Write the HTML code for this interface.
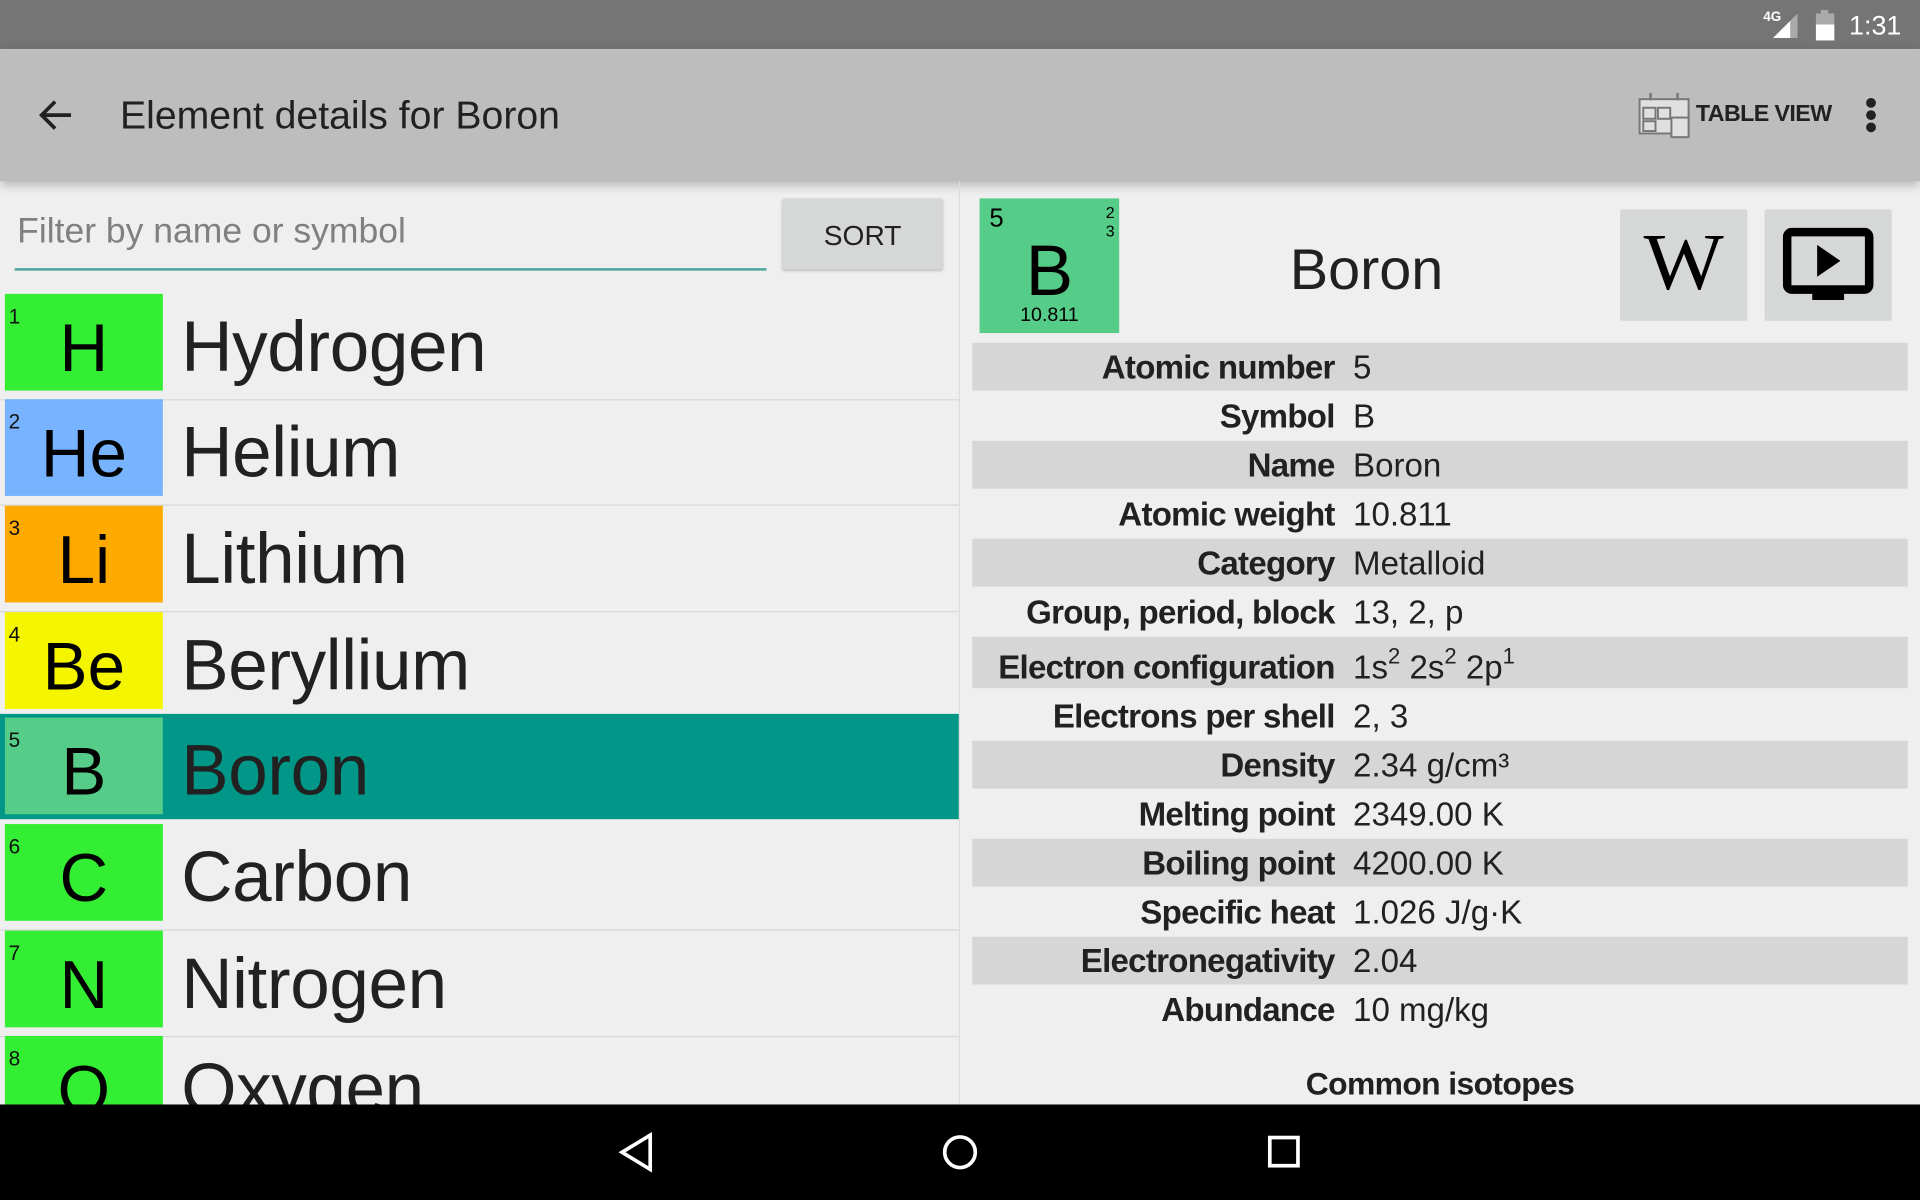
<!DOCTYPE html>
<html><head><meta charset="utf-8">
<style>
html,body{margin:0;padding:0;width:1920px;height:1200px;overflow:hidden;background:#eee;}
#s{position:absolute;left:0;top:0;width:1568px;height:980px;transform:scale(1.22449);transform-origin:0 0;font-family:"Liberation Sans",sans-serif;color:#212121;background:#efefef;overflow:hidden;}
.a{position:absolute;}
.row{position:absolute;left:0;width:783px;height:86px;border-bottom:1px solid #d8d8d8;}
.tile{position:absolute;left:4px;top:0;width:129px;height:79px;}
.tile .n{position:absolute;left:3px;top:9px;font-size:17px;color:#111;}
.tile .sy{position:absolute;left:0;width:129px;top:12px;text-align:center;font-size:55px;color:#000;}
.nm{position:absolute;left:148px;top:10px;font-size:58px;color:#212121;letter-spacing:-0.3px;}
.tr{position:absolute;left:794px;width:764px;height:39px;font-size:27px;line-height:41px;}
.tr.g{background:#d6d6d6;}
.tr b{position:absolute;right:468px;font-weight:bold;letter-spacing:-0.6px;}
.tr span{position:absolute;left:311px;}
sup{font-size:18px;line-height:0;vertical-align:12px;}
</style></head><body><div id="s">
<div class="a" style="left:0;top:0;width:1568px;height:40px;background:#757575;"></div>
<div class="a" style="left:1440px;top:8px;font-size:11px;color:#fff;font-weight:bold;">4G</div>
<svg class="a" style="left:1446px;top:9px" width="24" height="24"><polygon points="2,22 22,2 22,22" fill="#aaa"/><polygon points="2,22 16,8 16,22" fill="#fff"/></svg>
<svg class="a" style="left:1482px;top:8px" width="18" height="26"><rect x="5" y="0" width="6" height="3" fill="#aaa"/><rect x="1" y="3" width="15" height="22" fill="#aaa"/><rect x="1" y="12" width="15" height="13" fill="#fff"/></svg>
<div class="a" style="left:1510px;top:8px;font-size:22px;color:#fff;">1:31</div>
<div class="a" style="left:0;top:40px;width:1568px;height:108px;background:#bdbdbd;box-shadow:0 3px 8px rgba(0,0,0,.25);"></div>
<svg class="a" style="left:30px;top:80px" width="30" height="28"><path d="M28 14H5M15 3L4 14l11 11" stroke="#212121" stroke-width="3" fill="none"/></svg>
<div class="a" style="left:98px;top:76px;font-size:32px;color:#212121;">Element details for Boron</div>
<svg class="a" style="left:1338px;top:74px" width="44" height="40"><g fill="#e0e0e0" stroke="#777" stroke-width="1.6"><rect x="1" y="7" width="40" height="28"/><rect x="4" y="14" width="10" height="9"/><rect x="16" y="14" width="10" height="9"/><rect x="4" y="25" width="10" height="8"/><rect x="27" y="22" width="14" height="16"/></g><path d="M10 2v6M32 2v6" stroke="#777" stroke-width="2"/></svg>
<div class="a" style="left:1385px;top:83px;font-size:19px;font-weight:bold;letter-spacing:-0.5px;">TABLE VIEW</div>
<div class="a" style="left:1524px;top:80px;width:8px;height:8px;border-radius:4px;background:#212121;box-shadow:0 10px 0 #212121,0 20px 0 #212121;"></div>

<div class="a" style="left:14px;top:173px;font-size:29px;color:#808080;">Filter by name or symbol</div>
<div class="a" style="left:12px;top:219px;width:614px;height:2px;background:#4aa39a;"></div>
<div class="a" style="left:639px;top:162px;width:131px;height:58px;background:#d6d7d7;border-radius:2px;box-shadow:0 1px 2px rgba(0,0,0,.2);text-align:center;line-height:60px;font-size:23px;">SORT</div>
<div class="a" style="left:783px;top:148px;width:1px;height:754px;background:#ddd;"></div>

<div class="row" style="top:240px"><div class="tile" style="background:#33ee33"><div class="n">1</div><div class="sy">H</div></div><div class="nm">Hydrogen</div></div>
<div class="row" style="top:326px"><div class="tile" style="background:#77b3ff"><div class="n">2</div><div class="sy">He</div></div><div class="nm">Helium</div></div>
<div class="row" style="top:413px"><div class="tile" style="background:#ffaa00"><div class="n">3</div><div class="sy">Li</div></div><div class="nm">Lithium</div></div>
<div class="row" style="top:500px"><div class="tile" style="background:#f5f500"><div class="n">4</div><div class="sy">Be</div></div><div class="nm">Beryllium</div></div>
<div class="row" style="top:583px;height:86px;background:#009688;border:none"><div class="tile" style="top:3px;background:#55cc88"><div class="n">5</div><div class="sy">B</div></div><div class="nm" style="top:13px">Boron</div></div>
<div class="row" style="top:673px"><div class="tile" style="background:#33ee33"><div class="n">6</div><div class="sy">C</div></div><div class="nm">Carbon</div></div>
<div class="row" style="top:760px"><div class="tile" style="background:#33ee33"><div class="n">7</div><div class="sy">N</div></div><div class="nm">Nitrogen</div></div>
<div class="row" style="top:846px"><div class="tile" style="background:#33ee33"><div class="n">8</div><div class="sy">O</div></div><div class="nm">Oxygen</div></div>

<div class="a" style="left:800px;top:162px;width:114px;height:110px;background:#55cc88;color:#000;">
<div class="a" style="left:8px;top:5px;font-size:21px;">5</div>
<div class="a" style="left:103px;top:4px;font-size:13px;line-height:15px;">2<br>3</div>
<div class="a" style="left:0;width:114px;top:26px;text-align:center;font-size:58px;">B</div>
<div class="a" style="left:0;width:114px;top:87px;text-align:center;font-size:16px;">10.811</div>
</div>
<div class="a" style="left:1016px;width:200px;top:192px;text-align:center;font-size:47px;">Boron</div>
<div class="a" style="left:1323px;top:171px;width:104px;height:91px;background:#d6d7d7;border-radius:2px;"></div>
<div class="a" style="left:1323px;top:182px;width:104px;text-align:center;font-family:'Liberation Serif',serif;font-size:66px;line-height:66px;color:#000;transform:scaleX(1.05);">W</div>
<div class="a" style="left:1441px;top:171px;width:104px;height:91px;background:#d6d7d7;border-radius:2px;"></div>
<svg class="a" style="left:1456px;top:186px" width="76" height="62"><rect x="3.5" y="3.5" width="67" height="47" rx="4" fill="none" stroke="#000" stroke-width="7"/><rect x="24" y="50" width="26" height="9" fill="#000"/><polygon points="28,14 28,40 47,27" fill="#000"/></svg>

<div class="tr g" style="top:280px"><b>Atomic number</b><span>5</span></div>
<div class="tr" style="top:320px"><b>Symbol</b><span>B</span></div>
<div class="tr g" style="top:360px"><b>Name</b><span>Boron</span></div>
<div class="tr" style="top:400px"><b>Atomic weight</b><span>10.811</span></div>
<div class="tr g" style="top:440px"><b>Category</b><span>Metalloid</span></div>
<div class="tr" style="top:480px"><b>Group, period, block</b><span>13, 2, p</span></div>
<div class="tr g" style="top:520px;height:42px;line-height:50px"><b>Electron configuration</b><span>1s<sup>2</sup> 2s<sup>2</sup> 2p<sup>1</sup></span></div>
<div class="tr" style="top:565px"><b>Electrons per shell</b><span>2, 3</span></div>
<div class="tr g" style="top:605px"><b>Density</b><span>2.34 g/cm³</span></div>
<div class="tr" style="top:645px"><b>Melting point</b><span>2349.00 K</span></div>
<div class="tr g" style="top:685px"><b>Boiling point</b><span>4200.00 K</span></div>
<div class="tr" style="top:725px"><b>Specific heat</b><span>1.026 J/g·K</span></div>
<div class="tr g" style="top:765px"><b>Electronegativity</b><span>2.04</span></div>
<div class="tr" style="top:805px"><b>Abundance</b><span>10 mg/kg</span></div>
<div class="a" style="left:976px;width:400px;top:870px;text-align:center;font-size:26px;font-weight:bold;letter-spacing:-0.5px;">Common isotopes</div>

<div class="a" style="left:0;top:902px;width:1568px;height:78px;background:#000;"></div>
<svg class="a" style="left:504px;top:924px" width="32" height="34"><polygon points="27,3 27,31 4,17" fill="none" stroke="#fff" stroke-width="3"/></svg>
<svg class="a" style="left:768px;top:925px" width="32" height="32"><circle cx="16" cy="16" r="12.5" fill="none" stroke="#fff" stroke-width="3"/></svg>
<svg class="a" style="left:1034px;top:926px" width="30" height="30"><rect x="3" y="3" width="23" height="23" fill="none" stroke="#fff" stroke-width="3"/></svg>
</div></body></html>
